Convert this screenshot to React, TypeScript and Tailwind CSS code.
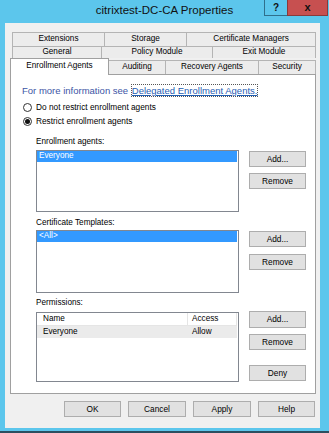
import React from 'react';

const Btn = ({ label, className = '' }: { label: string; className?: string }) => (
  <div
    className={`flex h-[16px] items-center justify-center border border-[#adadad] bg-[#e1e1e1] text-[8.3px] leading-none text-black ${className}`}
  >
    {label}
  </div>
);

const Tab = ({ label, w, h = 'h-[14px]', first }: { label: string; w: string; h?: string; first?: boolean }) => (
  <div
    className={`flex ${w} ${h} items-center justify-center border border-b-0 border-[#b4b4b4] bg-[#ececec] text-[8.2px] leading-none text-black ${first ? '' : '-ml-px'}`}
  >
    {label}
  </div>
);

const Radio = ({ label, checked }: { label: string; checked?: boolean }) => (
  <div className="flex h-[14px] items-center pl-[12px]">
    <div className="flex h-[9px] w-[9px] items-center justify-center rounded-full border border-[#333] bg-white">
      {checked && <div className="h-[5px] w-[5px] rounded-full bg-[#111]" />}
    </div>
    <span className="ml-[4px] text-[8.3px] leading-none text-black">{label}</span>
  </div>
);

const Label = ({ text, className = '' }: { text: string; className?: string }) => (
  <div className={`h-[12px] text-[8.2px] leading-[12px] text-black ${className}`}>{text}</div>
);

const SelectedRow = ({ text }: { text: string }) => (
  <div className="mr-px flex h-[11px] items-center bg-[#3399ff] pl-[2px] text-[8.2px] leading-none text-white">
    {text}
  </div>
);

export default function App() {
  return (
    <div className="flex h-[433px] w-[329px] flex-col border-b-2 border-[#2c4f60] bg-[#5cc6ec] font-['Liberation_Sans',Arial,sans-serif]">
      {/* title bar */}
      <div className="grid h-[23px] grid-cols-[65px_1fr_65px]">
        <div />
        <div className="flex items-center justify-center pb-[2px] text-[11.5px] text-[#111]">
          citrixtest-DC-CA Properties
        </div>
        <div className="flex items-start">
          <div className="flex h-[16px] w-[24px] items-center justify-center border border-t-0 border-[#2f6f8c] text-[10px] font-bold text-[#111]">
            ?
          </div>
          <div className="-ml-px flex h-[16px] w-[41px] items-center justify-center border border-t-0 border-[#8a3a3a] bg-[#c75050] text-[11px] font-bold text-[#111]">
            x
          </div>
        </div>
      </div>

      {/* client area */}
      <div className="ml-[5px] flex h-[405px] w-[315px] flex-col bg-[#f0f0f0]">
        <div className="ml-[7px] mt-[9px] flex">
          <Tab label="Extensions" w="w-[93px]" first />
          <Tab label="Storage" w="w-[83px]" />
          <Tab label="Certificate Managers" w="w-[130px]" />
        </div>
        <div className="ml-[7px] flex">
          <Tab label="General" w="w-[90px]" h="h-[12px]" first />
          <Tab label="Policy Module" w="w-[112px]" h="h-[12px]" />
          <Tab label="Exit Module" w="w-[104px]" h="h-[12px]" />
        </div>
        <div className="ml-[5px] flex h-[16px] items-end">
          <div className="relative z-10 -mb-px flex h-[17px] w-[99px] items-start justify-center border border-b-0 border-[#a0a0a0] bg-white pt-[3px] text-[8.2px] leading-none text-black">
            Enrollment Agents
          </div>
          <Tab label="Auditing" w="w-[58px]" />
          <Tab label="Recovery Agents" w="w-[94px]" />
          <Tab label="Security" w="w-[58px]" />
        </div>

        {/* tab page */}
        <div className="ml-[5px] flex h-[320px] w-[306px] flex-col border border-[#a0a0a0] bg-white">
          <div className="mt-[10px] h-[12px] whitespace-nowrap pl-[11px] text-[9.5px] leading-[12px]">
            <span className="text-[#3c55a5]">For more information see </span>
            <span className="border border-dotted border-[#555] text-[#1f5db3] underline">
              Delegated Enrollment Agents.
            </span>
          </div>
          <div className="mt-[3px]">
            <Radio label="Do not restrict enrollment agents" />
            <Radio label="Restrict enrollment agents" checked />
          </div>

          <div className="flex flex-col pl-[25px]">
            <Label text="Enrollment agents:" className="mt-[8px]" />
            <div className="mt-[2px] flex items-start">
              <div className="h-[62px] w-[203px] border border-[#828790] bg-white p-0">
                <SelectedRow text="Everyone" />
              </div>
              <div className="ml-[10px] mt-[1px] flex flex-col gap-[6px]">
                <Btn label="Add..." className="w-[57px]" />
                <Btn label="Remove" className="w-[57px]" />
              </div>
            </div>

            <Label text="Certificate Templates:" className="mt-[5px]" />
            <div className="mt-[1px] flex items-start">
              <div className="h-[63px] w-[203px] border border-[#828790] bg-white">
                <SelectedRow text="<All>" />
              </div>
              <div className="ml-[10px] mt-[1px] flex flex-col gap-[7px]">
                <Btn label="Add..." className="w-[57px]" />
                <Btn label="Remove" className="w-[57px]" />
              </div>
            </div>

            <Label text="Permissions:" className="mt-[4px]" />
            <div className="mt-[3px] flex items-start">
              <div className="h-[70px] w-[203px] border border-[#828790] bg-white">
                <div className="mr-px flex h-[13px] border-b border-[#e5e5e5] text-[8.2px] leading-none text-black">
                  <div className="flex w-[151px] items-center border-r border-[#e5e5e5] pl-[6px]">Name</div>
                  <div className="flex flex-1 items-center border-r border-[#e5e5e5] pl-[4px]">Access</div>
                </div>
                <div className="mr-px flex h-[12px] bg-[#ebebeb] text-[8.2px] leading-none text-black">
                  <div className="flex w-[151px] items-center pl-[6px]">Everyone</div>
                  <div className="flex flex-1 items-center pl-[4px]">Allow</div>
                </div>
              </div>
              <div className="ml-[10px] -mt-px flex flex-col">
                <Btn label="Add..." className="h-[17px] w-[57px]" />
                <Btn label="Remove" className="mt-[6px] w-[57px]" />
                <Btn label="Deny" className="mt-[15px] w-[57px]" />
              </div>
            </div>
          </div>
        </div>

        {/* dialog buttons */}
        <div className="mt-[7px] flex justify-end gap-[7px] pr-[5px]">
          <Btn label="OK" className="w-[57px]" />
          <Btn label="Cancel" className="w-[58px]" />
          <Btn label="Apply" className="w-[58px]" />
          <Btn label="Help" className="w-[57px]" />
        </div>
      </div>
    </div>
  );
}
